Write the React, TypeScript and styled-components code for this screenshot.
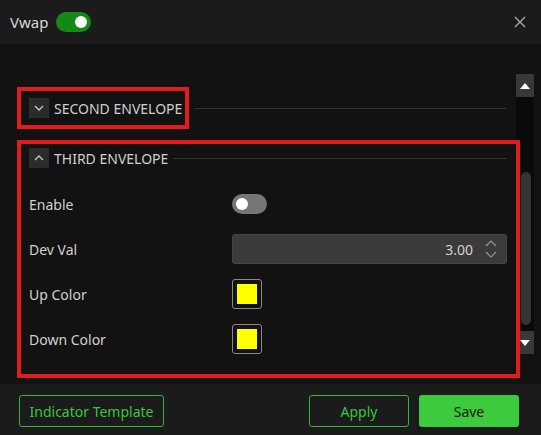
import styled, { createGlobalStyle } from 'styled-components';

const GlobalStyle = createGlobalStyle`
  html, body {
    margin: 0;
    padding: 0;
    background: #121212;
  }
  body {
    font-family: "Noto Sans", "Open Sans", sans-serif;
    color: #d4d4d4;
  }
  * {
    box-sizing: border-box;
  }
`;

interface EnvelopeRow {
  label: string;
  kind: 'toggle' | 'number' | 'color';
  value?: string;
}

const rows: EnvelopeRow[] = [
  { label: 'Enable', kind: 'toggle' },
  { label: 'Dev Val', kind: 'number', value: '3.00' },
  { label: 'Up Color', kind: 'color', value: '#ffff00' },
  { label: 'Down Color', kind: 'color', value: '#ffff00' },
];

function Chevron({ up }: { up: boolean }) {
  return (
    <ChevronBox>
      <svg width="12" height="12" viewBox="0 0 12 12">
        <path
          d={up ? 'M2 8 L6 4 L10 8' : 'M2 4 L6 8 L10 4'}
          fill="none"
          stroke="#c8c8c8"
          strokeWidth="1.3"
        />
      </svg>
    </ChevronBox>
  );
}

export default function App() {
  return (
    <>
      <GlobalStyle />
      <Dialog>
        <Header>
          <HeaderTitle>Vwap</HeaderTitle>
          <Switch on>
            <Knob />
          </Switch>
          <CloseButton>
            <svg width="12" height="12" viewBox="0 0 12 12">
              <path d="M1 1 L11 11 M11 1 L1 11" stroke="#a8a8a8" strokeWidth="1.4" />
            </svg>
          </CloseButton>
        </Header>

        <Body>
          <Content>
            <SectionHeader>
              <Highlight>
                <Chevron up={false} />
                <SectionTitle>SECOND ENVELOPE</SectionTitle>
              </Highlight>
              <Rule />
            </SectionHeader>

            <SectionBlock>
              <SectionHeader inner>
                <Chevron up />
                <SectionTitle>THIRD ENVELOPE</SectionTitle>
                <Rule />
              </SectionHeader>
              <Rows>
                {rows.map(row => (
                  <Row key={row.label}>
                    <RowLabel>{row.label}</RowLabel>
                    {row.kind === 'toggle' && (
                      <Switch on={false}>
                        <Knob />
                      </Switch>
                    )}
                    {row.kind === 'number' && (
                      <NumberField>
                        <span>{row.value}</span>
                        <Spinner>
                          <svg width="12" height="18" viewBox="0 0 12 18">
                            <path
                              d="M1 6 L6 1 L11 6 M1 12 L6 17 L11 12"
                              fill="none"
                              stroke="#9a9a9a"
                              strokeWidth="1.1"
                            />
                          </svg>
                        </Spinner>
                      </NumberField>
                    )}
                    {row.kind === 'color' && (
                      <Swatch>
                        <SwatchFill color={row.value ?? '#ffff00'} />
                      </Swatch>
                    )}
                  </Row>
                ))}
              </Rows>
            </SectionBlock>
          </Content>

          <Scrollbar>
            <ScrollButton>
              <svg width="10" height="6" viewBox="0 0 10 6">
                <path d="M0 6 L5 0 L10 6 Z" fill="#ffffff" />
              </svg>
            </ScrollButton>
            <ScrollTrack>
              <ScrollThumb />
            </ScrollTrack>
            <ScrollButton>
              <svg width="10" height="6" viewBox="0 0 10 6">
                <path d="M0 0 L5 6 L10 0 Z" fill="#ffffff" />
              </svg>
            </ScrollButton>
          </Scrollbar>
        </Body>

        <Footer>
          <OutlineButton wide>Indicator Template</OutlineButton>
          <FooterActions>
            <OutlineButton>Apply</OutlineButton>
            <SolidButton>Save</SolidButton>
          </FooterActions>
        </Footer>
      </Dialog>
    </>
  );
}

const Dialog = styled.div`
  width: 541px;
  height: 435px;
  display: flex;
  flex-direction: column;
  background: #121212;
  overflow: hidden;
`;

const Header = styled.div`
  height: 44px;
  flex-shrink: 0;
  display: flex;
  align-items: center;
  padding: 0 15px 0 10px;
  background: #1b1b1b;
`;

const HeaderTitle = styled.span`
  font-size: 15px;
  color: #d8d8d8;
  margin-right: 8px;
`;

const Switch = styled.div<{ on: boolean }>`
  width: 35px;
  height: 20px;
  border-radius: 10px;
  background: ${props => (props.on ? '#138a13' : '#767676')};
  display: flex;
  align-items: center;
  padding: 0 4px;
  justify-content: ${props => (props.on ? 'flex-end' : 'flex-start')};
`;

const Knob = styled.div`
  width: 12px;
  height: 12px;
  border-radius: 50%;
  background: #ffffff;
`;

const CloseButton = styled.div`
  margin-left: auto;
  display: flex;
  align-items: center;
`;

const Body = styled.div`
  flex: 1;
  display: flex;
  min-height: 0;
  overflow: hidden;
`;

const Content = styled.div`
  flex: 1;
  padding: 43px 0 0 17px;
  position: relative;
  z-index: 1;
`;

const SectionHeader = styled.div<{ inner?: boolean }>`
  display: flex;
  align-items: center;
  gap: 5px;
  height: ${props => (props.inner ? '20px' : 'auto')};
  padding-right: ${props => (props.inner ? '9px' : '10px')};
`;

const Highlight = styled.div`
  display: flex;
  align-items: center;
  gap: 5px;
  height: 42px;
  padding: 0 3px 0 8px;
  border: 4px solid #e21c1c;
`;

const ChevronBox = styled.div`
  width: 20px;
  height: 20px;
  flex-shrink: 0;
  background: #2b2b2b;
  display: flex;
  align-items: center;
  justify-content: center;
`;

const SectionTitle = styled.span`
  font-size: 14px;
  color: #cfcfcf;
  white-space: nowrap;
`;

const Rule = styled.div`
  flex: 1;
  height: 1px;
  background: #333333;
`;

const SectionBlock = styled.div`
  margin-top: 11px;
  margin-right: -4px;
  height: 238px;
  border: 4px solid #e21c1c;
  padding: 4px 0 0 8px;
`;

const Rows = styled.div`
  display: flex;
  flex-direction: column;
  margin-top: 21px;
  gap: 15px;
`;

const Row = styled.div`
  display: flex;
  align-items: center;
  height: 30px;
  padding-right: 9px;
`;

const RowLabel = styled.span`
  width: 203px;
  flex-shrink: 0;
  font-size: 14px;
  color: #d0d0d0;
`;

const NumberField = styled.div`
  flex: 1;
  height: 30px;
  display: flex;
  align-items: center;
  justify-content: flex-end;
  gap: 12px;
  padding-right: 9px;
  background: #3b3b3b;
  border: 1px solid #454545;
  border-radius: 3px;
  font-size: 14px;
  color: #d0d0d0;
`;

const Spinner = styled.div`
  display: flex;
  align-items: center;
`;

const Swatch = styled.div`
  width: 30px;
  height: 30px;
  border: 1px solid #8a8a8a;
  border-radius: 3px;
  display: flex;
  align-items: center;
  justify-content: center;
`;

const SwatchFill = styled.div<{ color: string }>`
  width: 20px;
  height: 20px;
  background: ${props => props.color};
`;

const Scrollbar = styled.div`
  width: 18px;
  margin: 30px 7px 30px 0;
  display: flex;
  flex-direction: column;
  background: #0a0a0a;
`;

const ScrollButton = styled.div`
  height: 23px;
  flex-shrink: 0;
  background: #383838;
  display: flex;
  align-items: center;
  justify-content: center;
`;

const ScrollTrack = styled.div`
  flex: 1;
  padding: 75px 3px 6px 5px;
  display: flex;
`;

const ScrollThumb = styled.div`
  flex: 1;
  border-radius: 5px;
  background: #333333;
`;

const Footer = styled.div`
  height: 51px;
  flex-shrink: 0;
  display: flex;
  align-items: flex-start;
  justify-content: space-between;
  padding: 11px 22px 0 19px;
  background: #1b1b1b;
`;

const FooterActions = styled.div`
  display: flex;
  gap: 10px;
`;

const OutlineButton = styled.button<{ wide?: boolean }>`
  width: ${props => (props.wide ? '145px' : '100px')};
  height: 32px;
  border: 1px solid #2fb82f;
  border-radius: 3px;
  background: transparent;
  color: #3cc43c;
  font-family: inherit;
  font-size: 14px;
  padding: 0;
`;

const SolidButton = styled.button`
  width: 100px;
  height: 32px;
  border: none;
  border-radius: 3px;
  background: #3ccb3c;
  color: #151515;
  font-family: inherit;
  font-size: 14px;
  padding: 0;
`;
